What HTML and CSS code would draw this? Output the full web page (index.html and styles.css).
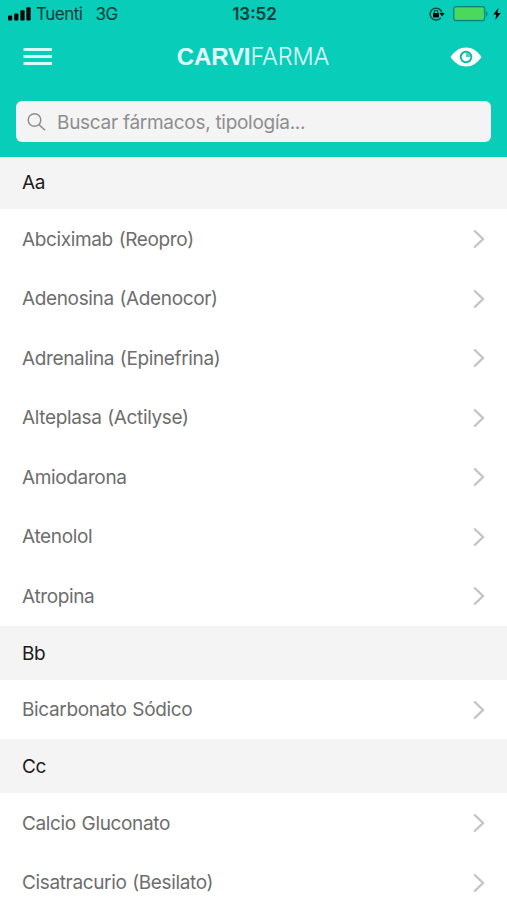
FILE: index.html
```html
<!DOCTYPE html>
<html lang="es">

<head>
  <meta charset="UTF-8">
  <meta name="viewport" content="width=device-width, initial-scale=1.0">
  <title>Carvifarma</title>
  <link rel="stylesheet" href="styles.css">
</head>

<body>
  <header class="header">
    <div class="status-bar">
      <div class="status-left">
        <svg class="signal" width="24" height="14" viewBox="0 0 24 14">
          <rect x="0" y="8.5" width="4.2" height="5" rx="1" />
          <rect x="6.2" y="6.5" width="4.2" height="7" rx="1" />
          <rect x="12.4" y="3.3" width="4.2" height="10.2" rx="1" />
          <rect x="18.4" y="0.3" width="4.2" height="13.2" rx="1" />
        </svg>
        <span class="carrier">Tuenti</span>
        <span class="network">3G</span>
      </div>
      <span class="time">13:52</span>
      <div class="status-right">
        <svg class="lock" width="16" height="14" viewBox="0 0 16 14">
          <path d="M12.9 5.5A6 6 0 1 0 11.8 10.8" fill="none" stroke="#063b36" stroke-width="1.3" />
          <path d="M10.6 6h5l-2.5 3.4z" />
          <rect x="4" y="6" width="6" height="4.6" rx="0.5" />
          <path d="M5.3 6.5V5a1.7 1.7 0 0 1 3.4 0v1.5" fill="none" stroke="#063b36" stroke-width="1.1" />
        </svg>
        <svg class="battery" width="36" height="16" viewBox="0 0 36 16">
          <rect x="0.7" y="0.7" width="31" height="14" rx="2.5" fill="none" stroke="#078577" stroke-width="1.2" />
          <rect x="1.8" y="1.8" width="28.8" height="11.8" rx="1" fill="#4cd95b" />
          <path d="M33 5.2c2 .6 2 4.6 0 5.2z" fill="#078577" />
        </svg>
        <svg class="bolt" width="8" height="12" viewBox="0 0 8 12">
          <path d="M5.4 0L0.3 6.6h3L2.3 12 7.7 5.1H4.5z" />
        </svg>
      </div>
    </div>
    <nav class="nav">
      <button class="icon-btn" aria-label="Menú">
        <svg width="29" height="18" viewBox="0 0 29 18" fill="#d2fff8">
          <rect x="0.5" y="0" width="28.5" height="3" />
          <rect x="0.5" y="7" width="28.5" height="3" />
          <rect x="0.5" y="14" width="28.5" height="3" />
        </svg>
      </button>
      <h1 class="logo"><b>CARVI</b><span>FARMA</span></h1>
      <button class="icon-btn" aria-label="Ver">
        <svg width="32" height="20" viewBox="0 0 32 20">
          <path d="M0.5 10C5 3.5 10 0.5 16 0.5S27 3.5 31.5 10C27 16.5 22 19.5 16 19.5S5 16.5 0.5 10z" fill="#fff" />
          <circle cx="16" cy="10" r="5.3" fill="none" stroke="#07b9a7" stroke-width="1.9" />
          <path d="M16 5.5v4.5h4.5A4.5 4.5 0 0 0 16 5.5z" fill="#4fcfc2" />
        </svg>
      </button>
    </nav>
    <div class="search-box">
      <svg class="search-icon" width="20" height="20" viewBox="0 0 20 20" fill="none" stroke="#8e8e8e" stroke-width="1.5">
        <circle cx="7.5" cy="8" r="6.3" />
        <path d="M12 12.6L18 18.3" />
      </svg>
      <input type="text" class="search-input" placeholder="Buscar fármacos, tipología...">
    </div>
  </header>

  <main class="list">
    <h2 class="letter letter-first">Aa</h2>
    <a class="item">Abciximab (Reopro)<svg class="arrow" viewBox="0 0 12 20"><path d="M1.2 1.5L10 10 1.2 18.5" /></svg></a>
    <a class="item">Adenosina (Adenocor)<svg class="arrow" viewBox="0 0 12 20"><path d="M1.2 1.5L10 10 1.2 18.5" /></svg></a>
    <a class="item">Adrenalina (Epinefrina)<svg class="arrow" viewBox="0 0 12 20"><path d="M1.2 1.5L10 10 1.2 18.5" /></svg></a>
    <a class="item">Alteplasa (Actilyse)<svg class="arrow" viewBox="0 0 12 20"><path d="M1.2 1.5L10 10 1.2 18.5" /></svg></a>
    <a class="item">Amiodarona<svg class="arrow" viewBox="0 0 12 20"><path d="M1.2 1.5L10 10 1.2 18.5" /></svg></a>
    <a class="item">Atenolol<svg class="arrow" viewBox="0 0 12 20"><path d="M1.2 1.5L10 10 1.2 18.5" /></svg></a>
    <a class="item">Atropina<svg class="arrow" viewBox="0 0 12 20"><path d="M1.2 1.5L10 10 1.2 18.5" /></svg></a>
    <h2 class="letter">Bb</h2>
    <a class="item">Bicarbonato Sódico<svg class="arrow" viewBox="0 0 12 20"><path d="M1.2 1.5L10 10 1.2 18.5" /></svg></a>
    <h2 class="letter">Cc</h2>
    <a class="item">Calcio Gluconato<svg class="arrow" viewBox="0 0 12 20"><path d="M1.2 1.5L10 10 1.2 18.5" /></svg></a>
    <a class="item">Cisatracurio (Besilato)<svg class="arrow" viewBox="0 0 12 20"><path d="M1.2 1.5L10 10 1.2 18.5" /></svg></a>
  </main>
</body>

</html>
```
FILE: styles.css
```css
* {
  box-sizing: border-box;
  padding: 0;
  margin: 0;
}

html,
body {
  width: 100%;
  height: 100%;
  overflow: hidden;
}

body {
  font-family: Inter, "Liberation Sans", sans-serif;
  background-color: #fff;
}

.header {
  height: 156.5px;
  background-color: #08cdb9;
}

/* status bar */
.status-bar {
  display: grid;
  grid-template-columns: 1fr auto 1fr;
  align-items: center;
  height: 27px;
  padding: 0 6px 0 8px;
  color: #063b36;
  font-size: 17px;
}

.status-left,
.status-right {
  display: flex;
  align-items: center;
}

.status-right {
  justify-content: flex-end;
}

.signal {
  margin-right: 4px;
}

.carrier {
  letter-spacing: -0.5px;
}

.network {
  margin-left: 13px;
  letter-spacing: -0.4px;
}

.time {
  font-size: 17px;
  font-weight: 600;
}

.lock {
  margin-right: 8px;
}

.battery {
  margin-right: 4px;
}

/* title row */
.nav {
  display: flex;
  align-items: center;
  justify-content: space-between;
  height: 60px;
  padding: 0 25px 0 23px;
}

.icon-btn {
  display: flex;
  border: none;
  background: none;
}

.logo {
  padding-left: 4px;
  font-family: "Liberation Sans", sans-serif;
  font-size: 24px;
  font-weight: 400;
  line-height: 28px;
  color: #e0fffb;
}

.logo b {
  letter-spacing: -0.1px;
}

.logo span {
  font-family: Inter, "Liberation Sans", sans-serif;
  font-size: 23.5px;
  font-weight: 300;
  letter-spacing: -0.1px;
}

/* search */
.search-box {
  display: flex;
  align-items: center;
  height: 41px;
  margin: 14px 16px 0;
  padding: 0 11px;
  border-radius: 6px;
  background-color: #f4f4f4;
}

.search-input {
  flex: 1;
  margin-left: 10px;
  padding-top: 2px;
  border: none;
  outline: none;
  background: none;
  font-family: inherit;
  font-size: 19px;
  letter-spacing: -0.28px;
  color: #333;
}

.search-input::placeholder {
  color: #8e8e8e;
}

/* list */
.letter {
  height: 54px;
  padding: 1px 0 0 22px;
  background-color: #f4f4f4;
  color: #1c1c1c;
  font-size: 19px;
  font-weight: 400;
  letter-spacing: -0.36px;
  line-height: 53px;
}

.letter-first {
  height: 52.5px;
  padding-top: 0;
  line-height: 52.5px;
}

.item {
  display: flex;
  align-items: center;
  justify-content: space-between;
  height: 59.5px;
  padding: 1px 22px 0;
  color: #6d6d6d;
  font-size: 19px;
  letter-spacing: -0.36px;
  word-spacing: 0.8px;
}

.arrow {
  width: 12px;
  height: 20px;
  fill: none;
  stroke: #c4c4c4;
  stroke-width: 2.4;
}
```
